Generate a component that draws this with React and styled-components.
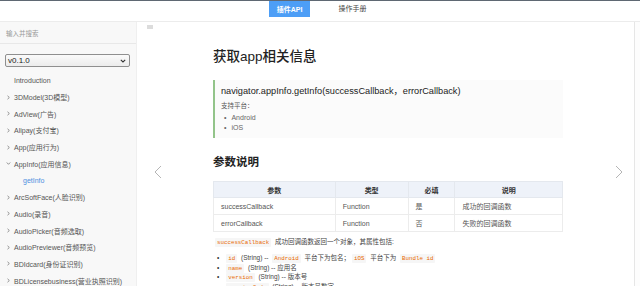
import React from "react";
import styled, { createGlobalStyle } from "styled-components";

const Global = createGlobalStyle`
  html, body { margin: 0; padding: 0; background: #fff; }
  body { font-family: "Liberation Sans", Arial, "Noto Sans CJK SC", sans-serif; }
  * { box-sizing: border-box; }
`;

const Page = styled.div`
  width: 640px;
  height: 286px;
  overflow: hidden;
  border-top: 1px solid #5f6873;
  display: flex;
  flex-direction: column;
`;

const Header = styled.div`
  height: 21px;
  flex: none;
  border-bottom: 1px solid #ececec;
  display: flex;
  justify-content: center;
  align-items: flex-start;
  gap: 22px;
  padding-left: 2px;
`;

const Tab = styled.div`
  width: 41px;
  height: 16px;
  display: flex;
  align-items: center;
  justify-content: center;
  font-size: 7px;
  font-weight: ${(p) => (p.$active ? 700 : 400)};
  color: ${(p) => (p.$active ? "#fff" : "#444")};
  background: ${(p) => (p.$active ? "#4d9ef6" : "transparent")};
  margin-top: ${(p) => (p.$active ? "0" : "-1px")};
`;

const Body = styled.div`
  flex: 1;
  display: flex;
  min-height: 0;
  overflow: hidden;
`;

const Sidebar = styled.div`
  width: 137px;
  flex: none;
  background: #f8f8f8;
  border-right: 1px solid #efefef;
  display: flex;
  flex-direction: column;
  overflow: hidden;
  & > * { flex: none; }
`;

const Search = styled.div`
  height: 22px;
  border-bottom: 1px solid #e8e8e8;
  padding-left: 6px;
  display: flex;
  align-items: center;
  font-size: 6.5px;
  color: #9a9a9a;
`;

const SelectBox = styled.div`
  margin: 10px 6px 0 5px;
  height: 13px;
  border: 1px solid #8f8f8f;
  border-radius: 2px;
  background: linear-gradient(#fafafa, #ececec);
  display: flex;
  align-items: center;
  justify-content: space-between;
  padding: 0 3px 0 2px;
  font-size: 8px;
  color: #222;
`;

const Nav = styled.ul`
  list-style: none;
  margin: 5px 0 0;
  padding: 0;
`;

const NavItem = styled.li`
  height: 16.7px;
  display: flex;
  align-items: center;
  padding-left: ${(p) => (p.$child ? "23px" : "6px")};
  font-size: 7px;
  color: ${(p) => (p.$child ? "#4f8fe0" : "#555555")};
  white-space: nowrap;
`;

const Caret = styled.span`
  width: 8px;
  flex: none;
  display: flex;
  align-items: center;
`;

const Main = styled.div`
  flex: 1;
  position: relative;
  display: flex;
  overflow: hidden;
`;

const Content = styled.div`
  flex: 1;
  padding: 0 0 0 76px;
  display: flex;
  flex-direction: column;
  overflow: hidden;
  & > * { flex: none; }
`;

const Collapse = styled.div`
  position: absolute;
  left: 10px;
  top: 3px;
  width: 6px;
  height: 4px;
  background: #dcdcdc;
`;

const ScrollTrack = styled.div`
  width: 6px;
  flex: none;
  border-left: 1px solid #e6e6e6;
  background: #fdfdfd;
`;

const Arrow = styled.div`
  position: absolute;
  top: 143px;
  ${(p) => (p.$right ? "right: 17px;" : "left: 17px;")}
  width: 8px;
  height: 14px;
  display: flex;
`;

const Title = styled.h1`
  margin: 24px 0 0;
  font-size: 13.5px;
  font-weight: 500;
  line-height: 22px;
  color: #222;
`;

const Quote = styled.div`
  margin-top: 12px;
  width: 350px;
  height: 58px;
  background: #fbfbfb;
  border-left: 2px solid #93c48a;
  padding: 5px 0 0 6px;
`;

const Code = styled.div`
  font-size: 9.2px;
  color: #222;
  line-height: 13px;
`;

const Small = styled.div`
  font-size: 6.5px;
  color: #555;
  margin-top: 2px;
  line-height: 11px;
`;

const QList = styled.ul`
  margin: 2px 0 0;
  padding: 0 0 0 3px;
  list-style: none;
`;

const QItem = styled.li`
  font-size: 7px;
  color: #666;
  line-height: 10px;
  &::before {
    content: "•";
    margin-right: 5px;
    color: #666;
  }
`;

const H2 = styled.h2`
  margin: 16px 0 0;
  font-size: 11.5px;
  font-weight: 700;
  line-height: 17px;
  color: #222;
`;

const Table = styled.table`
  margin-top: 10px;
  width: 350px;
  border-collapse: collapse;
  font-size: 7px;
  color: #555;
`;

const Th = styled.th`
  height: 16px;
  background: #eef2f9;
  border: 1px solid #e4e8ee;
  font-weight: 700;
  color: #333;
  text-align: center;
  width: ${(p) => p.$w}px;
  padding: 0;
`;

const Td = styled.td`
  height: 17px;
  border: 1px solid #ececec;
  padding: 0 0 0 7px;
  text-align: left;
`;

const Para = styled.div`
  margin-top: 4px;
  font-size: 6.5px;
  color: #444;
  line-height: 12px;
`;

const Tag = styled.code`
  font-family: "Liberation Mono", "DejaVu Sans Mono", monospace;
  font-size: 5.8px;
  line-height: 1;
  color: #e96900;
  background: #f6f6f6;
  padding: 1px 2px;
  margin: 0 2px;
  border-radius: 1px;
`;

const PList = styled.ul`
  margin: 5px 0 0;
  padding: 0 0 0 4px;
  list-style: none;
`;

const PItem = styled.li`
  height: 9.6px;
  line-height: 9.6px;
  font-size: 6.5px;
  color: #444;
  white-space: nowrap;
  &::before {
    content: "•";
    margin-right: 5px;
    color: #333;
  }
`;

const Chevron = ({ dir }) => (
  <svg width="8" height="14" viewBox="0 0 8 14">
    <path
      d={dir === "right" ? "M1 1 L7 7 L1 13" : "M7 1 L1 7 L7 13"}
      fill="none"
      stroke="#b5b5b5"
      strokeWidth="1"
    />
  </svg>
);

const CaretIcon = ({ open }) => (
  <svg width="5" height="5" viewBox="0 0 5 5">
    <path
      d={open ? "M0.8 1.5 L2.5 3.3 L4.2 1.5" : "M1.5 0.8 L3.3 2.5 L1.5 4.2"}
      fill="none"
      stroke="#777"
      strokeWidth="0.8"
    />
  </svg>
);

const nav = [
  { t: "Introduction", noCaret: true },
  { t: "3DModel(3D模型)" },
  { t: "AdView(广告)" },
  { t: "Alipay(支付宝)" },
  { t: "App(应用行为)" },
  { t: "AppInfo(应用信息)", open: true },
  { t: "getInfo", child: true },
  { t: "ArcSoftFace(人脸识别)" },
  { t: "Audio(录音)" },
  { t: "AudioPicker(音频选取)" },
  { t: "AudioPreviewer(音频预览)" },
  { t: "BDIdcard(身份证识别)" },
  { t: "BDLicensebusiness(营业执照识别)" },
];

export default function App() {
  return (
    <>
      <Global />
      <Page>
        <Header>
          <Tab $active>插件API</Tab>
          <Tab>操作手册</Tab>
        </Header>
        <Body>
          <Sidebar>
            <Search>输入并搜索</Search>
            <SelectBox>
              <span>v0.1.0</span>
              <svg width="6" height="4" viewBox="0 0 6 4">
                <path d="M0.8 0.8 L3 3 L5.2 0.8" fill="none" stroke="#333" strokeWidth="1.1" />
              </svg>
            </SelectBox>
            <Nav>
              {nav.map((n) => (
                <NavItem key={n.t} $child={n.child}>
                  {!n.child && (
                    <Caret>{n.noCaret ? null : <CaretIcon open={n.open} />}</Caret>
                  )}
                  <span>{n.t}</span>
                </NavItem>
              ))}
            </Nav>
          </Sidebar>
          <Main>
            <Collapse />
            <Arrow>
              <Chevron dir="left" />
            </Arrow>
            <Arrow $right>
              <Chevron dir="right" />
            </Arrow>
            <Content>
              <Title>获取app相关信息</Title>
              <Quote>
                <Code>navigator.appInfo.getInfo(successCallback，errorCallback)</Code>
                <Small>支持平台：</Small>
                <QList>
                  <QItem>Android</QItem>
                  <QItem>iOS</QItem>
                </QList>
              </Quote>
              <H2>参数说明</H2>
              <Table>
                <thead>
                  <tr>
                    <Th $w={122}>参数</Th>
                    <Th $w={73}>类型</Th>
                    <Th $w={47}>必填</Th>
                    <Th $w={108}>说明</Th>
                  </tr>
                </thead>
                <tbody>
                  <tr>
                    <Td>successCallback</Td>
                    <Td>Function</Td>
                    <Td>是</Td>
                    <Td>成功的回调函数</Td>
                  </tr>
                  <tr>
                    <Td>errorCallback</Td>
                    <Td>Function</Td>
                    <Td>否</Td>
                    <Td>失败的回调函数</Td>
                  </tr>
                </tbody>
              </Table>
              <Para>
                <Tag>successCallback</Tag> 成功回调函数返回一个对象，其属性包括:
              </Para>
              <PList>
                <PItem>
                  <Tag>id</Tag> (String) -- <Tag>Android</Tag> 平台下为包名；<Tag>iOS</Tag> 平台下为 <Tag>Bundle id</Tag>
                </PItem>
                <PItem>
                  <Tag>name</Tag> (String) -- 应用名
                </PItem>
                <PItem>
                  <Tag>version</Tag> (String) -- 版本号
                </PItem>
                <PItem>
                  <Tag>versionCode</Tag> (String) -- 版本号数字
                </PItem>
              </PList>
            </Content>
            <ScrollTrack />
          </Main>
        </Body>
      </Page>
    </>
  );
}
